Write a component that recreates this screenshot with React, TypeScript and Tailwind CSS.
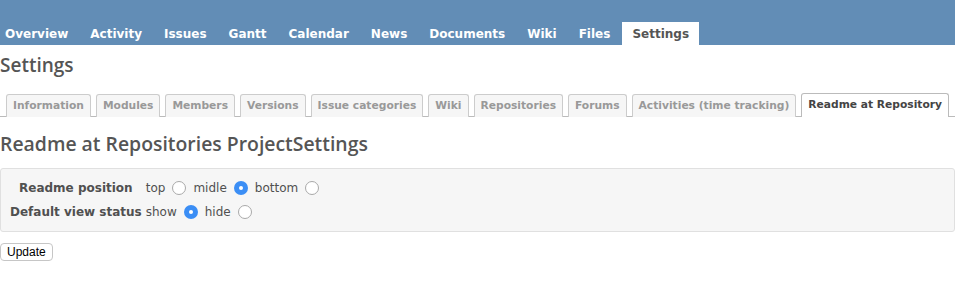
import React from "react";

const menu = ["Overview", "Activity", "Issues", "Gantt", "Calendar", "News", "Documents", "Wiki", "Files"];
const tabs = [
  "Information",
  "Modules",
  "Members",
  "Versions",
  "Issue categories",
  "Wiki",
  "Repositories",
  "Forums",
  "Activities (time tracking)",
];

function Radio({ checked }: { checked?: boolean }) {
  return checked ? (
    <span className="inline-flex h-[14px] w-[14px] shrink-0 items-center justify-center rounded-full bg-[#3b8ef5] align-middle">
      <span className="h-[4px] w-[4px] rounded-full bg-white" />
    </span>
  ) : (
    <span className="inline-block h-[14px] w-[14px] shrink-0 rounded-full border border-[#a9a9a9] bg-white align-middle" />
  );
}

export default function App() {
  const body = { fontFamily: '"DejaVu Sans", Verdana, sans-serif' };
  const head = { fontFamily: '"Open Sans", "Trebuchet MS", sans-serif' };
  return (
    <div className="h-[282px] w-[955px] overflow-hidden bg-white text-[#484848]" style={body}>
      <div className="flex h-[45px] items-end bg-[#628db6]">
        <div className="-ml-[5px] flex">
          {menu.map((m) => (
            <div key={m} className="mr-[2px] flex h-[23px] items-center whitespace-nowrap px-[10px] text-[12px] font-bold text-white">
              {m}
            </div>
          ))}
          <div className="flex h-[23px] items-center whitespace-nowrap bg-white px-[10px] text-[12px] font-bold text-[#555]">Settings</div>
        </div>
      </div>
      <h2 className="mt-[7px] h-[26px] text-[19px] font-semibold leading-[26px] text-[#555]" style={head}>
        Settings
      </h2>
      <div className="mt-[16px] flex h-[23px] items-end border-b border-[#bbb] pl-[6px]">
        {tabs.map((t) => (
          <div
            key={t}
            className="-mb-px mr-[5px] flex h-[23px] shrink-0 items-center whitespace-nowrap rounded-t-[3px] border border-b-0 border-[#ccc] bg-[#f6f6f6] px-[6px] text-[10.7px] font-bold text-[#999]"
          >
            {t}
          </div>
        ))}
        <div className="-mb-px flex h-[24px] shrink-0 items-center whitespace-nowrap rounded-t-[3px] border border-b-0 border-[#bbb] bg-white px-[6px] text-[10.7px] font-bold text-[#444]">
          Readme at Repository
        </div>
      </div>
      <h3 className="mt-[14px] h-[26px] text-[19.4px] font-semibold leading-[26px] text-[#555]" style={head}>
        Readme at Repositories ProjectSettings
      </h3>
      <div className="mt-[11px] h-[64px] rounded-[3px] border border-[#e0e0e0] bg-[#f6f6f6] pt-[7px]">
        <table className="border-separate border-spacing-0 text-[12px]">
          <tbody>
            <tr className="h-[24px]">
              <th className="whitespace-nowrap pl-[9px] text-center font-bold text-[#505050]">Readme position</th>
              <td className="pl-[4px] text-[#505050]">
                <span className="inline-flex items-center gap-[7px] whitespace-nowrap">
                  top <Radio /> midle <Radio checked /> bottom <Radio />
                </span>
              </td>
            </tr>
            <tr className="h-[24px]">
              <th className="whitespace-nowrap pl-[9px] text-center font-bold text-[#505050]">Default view status</th>
              <td className="pl-[4px] text-[#505050]">
                <span className="inline-flex items-center gap-[7px] whitespace-nowrap">
                  show <Radio checked /> hide <Radio />
                </span>
              </td>
            </tr>
          </tbody>
        </table>
      </div>
      <button
        className="mt-[11px] h-[18px] rounded-[4px] border border-[#c6c6c6] bg-white px-[6px] text-[12px] leading-[16px] text-black"
        style={{ fontFamily: '"Liberation Sans", Arial, sans-serif' }}
      >
        Update
      </button>
    </div>
  );
}
